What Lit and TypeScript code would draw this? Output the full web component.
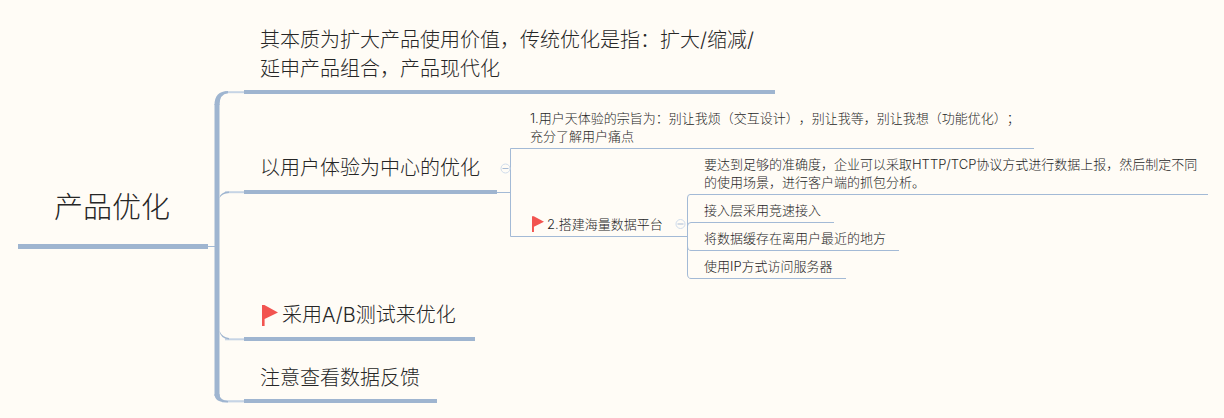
import { LitElement, html, css, svg } from "lit";
import { customElement } from "lit/decorators.js";

interface Node { x: number; y: number; cls: string; text: string; flag?: boolean; }

const NODES: Node[] = [
  { x: 54, y: 187, cls: "root", text: "产品优化" },
  { x: 260, y: 26, cls: "main", text: "其本质为扩大产品使用价值，传统优化是指：扩大/缩减/\n延申产品组合，产品现代化" },
  { x: 260, y: 154, cls: "main", text: "以用户体验为中心的优化" },
  { x: 262, y: 301, cls: "main", text: "采用A/B测试来优化", flag: true },
  { x: 260, y: 364, cls: "main", text: "注意查看数据反馈" },
  { x: 530, y: 109, cls: "sub", text: "1.用户天体验的宗旨为：别让我烦（交互设计），别让我等，别让我想（功能优化）；\n充分了解用户痛点" },
  { x: 532, y: 215, cls: "sub", text: "2.搭建海量数据平台", flag: true },
  { x: 704, y: 155, cls: "sub", text: "要达到足够的准确度，企业可以采取HTTP/TCP协议方式进行数据上报，然后制定不同\n的使用场景，进行客户端的抓包分析。" },
  { x: 704, y: 201, cls: "sub", text: "接入层采用竞速接入" },
  { x: 704, y: 229, cls: "sub", text: "将数据缓存在离用户最近的地方" },
  { x: 704, y: 257, cls: "sub", text: "使用IP方式访问服务器" },
];

const THICK = "#9fb5d0";
const LIGHT = "#c6d4e5";
const THIN = "#a3bad6";
const BG = "#fffcf6";

@customElement("app-root")
export class AppRoot extends LitElement {
  static styles = css`
    :host { display: block; position: relative; width: 1224px; height: 418px; overflow: hidden; background: #fffcf6; color: #262626; font-family: "Inter", "Noto Sans CJK SC", sans-serif; font-weight: 300; text-spacing-trim: space-all; }
    .lines { position: absolute; inset: 0; }
    .node { position: absolute; white-space: pre; display: flex; align-items: center; }
    .root { font-size: 29px; line-height: 42px; }
    .main { font-size: 20px; line-height: 29px; }
    .sub { font-size: 13px; line-height: 18px; }
    .main .flag { width: 16px; height: 21px; margin-right: 4px; }
    .sub .flag { width: 12px; height: 16px; margin-right: 3px; }
  `;

  private flag() {
    return html`<svg class="flag" viewBox="0 0 16 21"><path fill="#f25450" d="M0 0h2.400L16 7.500 2.600 14v7H0z"/></svg>`;
  }

  private bar(x1: number, x2: number, y1: number, y2: number) {
    return svg`<rect x=${x1} y=${y1} width=${x2 - x1} height=${y2 - y1} fill=${THICK}/>`;
  }

  private lines() {
    return svg`
      ${this.bar(18, 208, 244, 249)}
      <line x1="208" x2="215" y1="246.500" y2="246.500" stroke=${THIN}/>
      <rect x="214.500" y="104" width="5" height="292" fill=${THICK}/>
      <path d="M225 91.200H244V93.200H225z" fill=${LIGHT}/>
      <path d="M225 191.200H244V193.200H225z" fill=${LIGHT}/>
      <path d="M225 338.300H244V340.300H225z" fill=${LIGHT}/>
      <path d="M222 400.200H244V402.400H222z" fill=${LIGHT}/>
      <path d="M214.500 105Q214.500 91 228 91V93.200Q219.500 94 219.500 105z" fill=${THICK}/>
      <path d="M219.500 198Q220 192 229 191.500V193Q222 193.500 219.500 198z" fill=${THICK}/>
      <path d="M219.500 331Q220 338 229 339.500V338Q222 337 219.500 331z" fill=${THICK}/>
      <path d="M214.500 394Q214.500 402.500 228 402.500V401Q219.500 400 219.500 394z" fill=${THICK}/>
      ${this.bar(244, 775, 90, 94)}
      ${this.bar(244, 497, 190, 194)}
      ${this.bar(244, 475, 337, 341)}
      ${this.bar(244, 437, 399, 403)}
      <path d="M497 192.500H510.500M510.500 148.500V236.500M510.500 148.500H1034M510.500 236.500H687" stroke=${THIN} fill="none"/>
      <path d="M690 194.500Q687.500 194.500 687.500 198V274Q687.500 278.500 691 278.500H846M690 194.500H1208M687.500 226Q687.500 222.500 691 222.500H834M687.500 246Q687.500 250.500 691 250.500H899" stroke=${THIN} fill="none"/>
      ${this.toggle(505.500, 168.500)}
      ${this.toggle(680.500, 224)}
    `;
  }

  private toggle(x: number, y: number) {
    return svg`<circle cx=${x} cy=${y} r="4.500" fill=${BG} stroke="#cfdcec"/>
      <line x1=${x - 3} x2=${x + 3} y1=${y} y2=${y} stroke="#a9bcd5"/>`;
  }

  render() {
    return html`
      <svg class="lines" width="1224" height="418">${this.lines()}</svg>
      ${NODES.map(
        (n) => html`<div class="node ${n.cls}" style="left:${n.x}px;top:${n.y}px">${n.flag ? this.flag() : ""}<span>${n.text}</span></div>`
      )}
    `;
  }
}
